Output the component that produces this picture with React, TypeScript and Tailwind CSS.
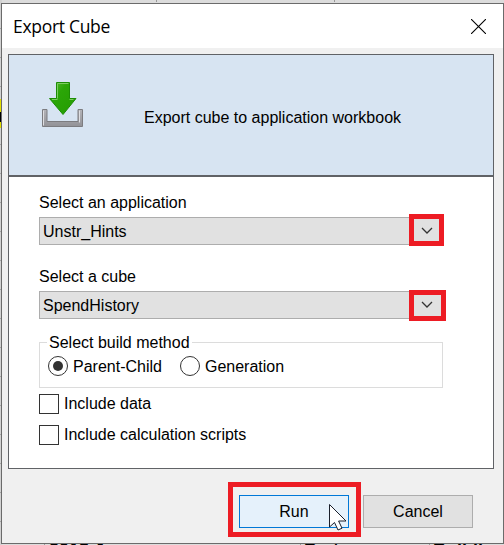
import type { ReactNode } from "react";

function Chevron() {
  return (
    <svg width="12" height="8" viewBox="0 0 12 8" fill="none" stroke="#333" strokeWidth="1.3">
      <path d="M1 1 6 6 11 1" />
    </svg>
  );
}

function Select({ label, value, ring, arrow }: { label: string; value: string; ring: string; arrow: string }) {
  return (
    <div>
      <div className="h-[23px] leading-[18px]">{label}</div>
      <div className="relative flex h-7 w-[404px] items-center border border-[#adadad] bg-[#e1e1e1] pl-[3px]">
        <span className="pt-px leading-[18px]">{value}</span>
        <div className={ring}>
          <div className={arrow}>
            <Chevron />
          </div>
        </div>
      </div>
    </div>
  );
}

function Radio({ checked, children }: { checked?: boolean; children: ReactNode }) {
  return (
    <div className="flex items-center gap-[5px]">
      <span className="flex size-5 items-center justify-center rounded-full border border-[#333] bg-white">
        {checked && <span className="size-[10px] rounded-full bg-[#333]" />}
      </span>
      <span className="pt-[2px] leading-[18px]">{children}</span>
    </div>
  );
}

function Check({ children }: { children: ReactNode }) {
  return (
    <div className="flex h-5 items-center gap-[5px]">
      <span className="size-5 border border-[#333] bg-white" />
      <span className="leading-5">{children}</span>
    </div>
  );
}

function DownloadIcon() {
  return (
    <svg width="44" height="48" viewBox="0 0 44 48">
      <defs>
        <linearGradient id="tray" x1="0" y1="0" x2="0" y2="1">
          <stop offset="0" stopColor="#b4b4b9" />
          <stop offset="1" stopColor="#929297" />
        </linearGradient>
        <linearGradient id="arrow" x1="0" y1="0" x2="1" y2="1">
          <stop offset="0" stopColor="#5fc03c" />
          <stop offset="0.35" stopColor="#2ba607" />
          <stop offset="1" stopColor="#249b02" />
        </linearGradient>
      </defs>
      <path d="M1.5 28.5h4.5v12h31v-12h4.5v17h-40z" fill="url(#tray)" stroke="#7c7c80" />
      <path d="M2.5 29.5v15M38.5 29.5v12" stroke="#dedee1" />
      <path d="M15.5 1.5h13v16h6.5L22 33.5 8.5 17.5h7z" fill="url(#arrow)" stroke="#1c8d04" strokeLinejoin="round" />
      <path d="M16.5 17.5v-15h11M11 18.5h5.5M28.5 18.5h4" stroke="#7dcc61" fill="none" />
    </svg>
  );
}

function Sheet() {
  return (
    <div className="absolute inset-0 overflow-hidden bg-[#dcdcdc] text-[18px] font-bold">
      <div className="absolute inset-y-0 left-0 w-[2px] bg-[repeating-linear-gradient(#d2d2d2_0_28px,#a6a6a6_28px_29px)]" />
      <div className="absolute left-0 top-[99px] h-[29px] w-[2px] bg-[#e3df00]" />
      <div className="absolute left-0 top-[112px] h-[10px] w-[2px] bg-black" />
      <div className="absolute left-[156px] top-0 h-[2px] w-px bg-[#999]" />
      <div className="absolute left-[334px] top-0 h-[2px] w-px bg-[#999]" />
      <div className="absolute left-[44px] top-[544px] h-px w-px bg-[#999]" />
      <div className="absolute left-[300px] top-[544px] h-px w-px bg-[#999]" />
      <div className="absolute left-[429px] top-[544px] h-px w-px bg-[#999]" />
      <span className="absolute left-[49px] top-[540px] leading-[20px]">2015 J</span>
      <span className="absolute left-[304px] top-[540px] leading-[20px]">Partner</span>
      <span className="absolute left-[433px] top-[540px] leading-[20px]">Buildi</span>
    </div>
  );
}

export default function App() {
  return (
    <div className="relative h-[545px] w-[504px] overflow-hidden font-['Liberation_Sans',Arial,sans-serif] text-[16px] text-black">
      <Sheet />
      <div className="absolute left-px top-[3px] flex h-[541px] w-[503px] flex-col border border-[#6b6b6b] bg-[#f0f0f0]">
        <header className="flex h-11 shrink-0 items-center justify-between bg-white pl-[11px] pr-[17px]">
          <h1 className="font-['Open_Sans','Noto_Sans',sans-serif] text-[17.5px] tracking-[-0.3px]">Export Cube</h1>
          <svg width="15" height="15" viewBox="0 0 15 15" stroke="#000" strokeWidth="1.1">
            <path d="M0 0 15 15M15 0 0 15" />
          </svg>
        </header>
        <main className="ml-[6px] mt-[6px] flex h-[415px] w-[486px] shrink-0 flex-col border border-[#606266] bg-white">
          <section className="flex h-[122px] shrink-0 border-b-2 border-[#606266] bg-[#d7e4f2]">
            <div className="ml-[32px] mt-[26px]">
              <DownloadIcon />
            </div>
            <p className="ml-[59px] mt-[54px] leading-[18px]">Export cube to application workbook</p>
          </section>
          <section className="flex flex-col pl-[30px] pt-[17px]">
            <Select
              label="Select an application"
              value="Unstr_Hints"
              ring="absolute left-[369px] top-[-4px] h-8 w-[35px] border-5 border-[#ed1c24] bg-[#e1e1e1]"
              arrow="absolute left-[7px] top-[8px]"
            />
            <div className="mt-[23px]">
              <Select
                label="Select a cube"
                value="SpendHistory"
                ring="absolute left-[369px] top-[-2px] h-[31px] w-[37px] border-5 border-[#ed1c24] bg-[#e1e1e1]"
                arrow="absolute left-[7px] top-[6px]"
              />
            </div>
            <fieldset className="mt-[13px] flex h-[56px] w-[404px] border border-[#dcdcdc] pl-2">
              <legend className="ml-[-1px] px-[2px] pt-[2px] leading-[18px]">Select build method</legend>
              <div className="mt-[4px] flex h-5 gap-[18px]">
                <Radio checked>Parent-Child</Radio>
                <Radio>Generation</Radio>
              </div>
            </fieldset>
            <div className="mt-[6px] flex flex-col gap-[11px]">
              <Check>Include data</Check>
              <Check>Include calculation scripts</Check>
            </div>
          </section>
        </main>
        <footer className="ml-[226px] mt-[13px] flex items-start gap-[2px]">
          <div className="relative flex h-[55px] w-[133px] items-start border-5 border-[#ed1c24] pl-[6px] pt-[8px]">
            <button className="h-[33px] w-[110px] border border-[#0078d7] bg-[#e5f1fb]">Run</button>
            <svg className="absolute left-[95px] top-[16px]" width="20" height="29" viewBox="0 0 20 29">
              <path d="M1.5 1.5v22.5l5-4.5 3.5 7.5 4-1.8-3.4-7.2h7.4z" fill="#fff" stroke="#1a1f2b" />
            </svg>
          </div>
          <button className="mt-[13px] h-[33px] w-[110px] border border-[#adadad] bg-[#e1e1e1]">Cancel</button>
        </footer>
      </div>
    </div>
  );
}
